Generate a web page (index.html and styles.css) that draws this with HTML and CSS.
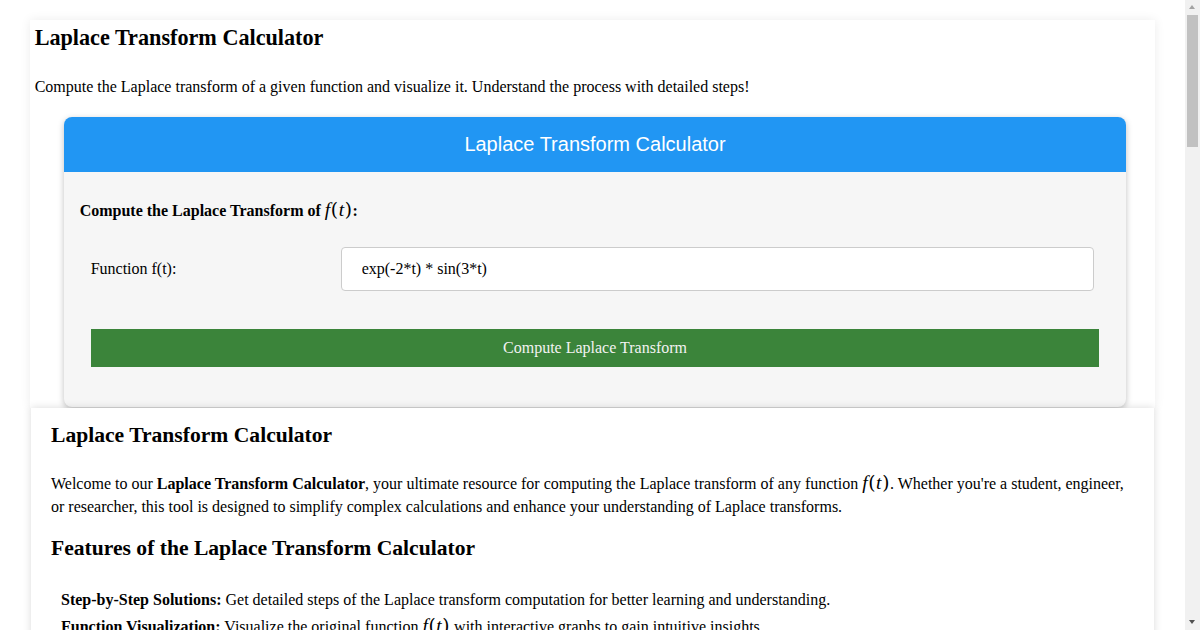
FILE: index.html
```html
<!DOCTYPE html>
<html lang="en">
<head>
  <meta charset="UTF-8">
  <meta name="viewport" content="width=device-width, initial-scale=1">
  <title>Laplace Transform Calculator</title>
  <link rel="stylesheet" href="styles.css">
</head>
<body>

  <div class="container">
    <h2>Laplace Transform Calculator</h2>
    <p>Compute the Laplace transform of a given function and visualize it. Understand the process with detailed steps!</p>

    <div class="card">
      <div class="card-header">Laplace Transform Calculator</div>
      <div class="card-body">
        <h4>Compute the Laplace Transform of <span class="math"><i>f</i>(<i>t</i>)</span>:</h4>

        <div class="form-row">
          <label for="func">Function f(t):</label>
          <input type="text" id="func" value="exp(-2*t) * sin(3*t)">
        </div>

        <button class="compute-btn">Compute Laplace Transform</button>
      </div>
    </div>
  </div>

  <div class="content">
    <h2>Laplace Transform Calculator</h2>
    <p>Welcome to our <b>Laplace Transform Calculator</b>, your ultimate resource for computing the Laplace transform of any function <span class="math"><i>f</i>(<i>t</i>)</span>. Whether you're a student, engineer, or researcher, this tool is designed to simplify complex calculations and enhance your understanding of Laplace transforms.</p>

    <h2>Features of the Laplace Transform Calculator</h2>
    <ul class="features">
      <li><b>Step-by-Step Solutions:</b> Get detailed steps of the Laplace transform computation for better learning and understanding.</li>
      <li><b>Function Visualization:</b> Visualize the original function <span class="math"><i>f</i>(<i>t</i>)</span> with interactive graphs to gain intuitive insights.</li>
      <li><b>Common Transforms:</b> Quickly look up the Laplace transforms of frequently used functions.</li>
      <li><b>Inverse Transforms:</b> Switch direction and recover the original function from its transform.</li>
    </ul>
  </div>

  <!-- browser scrollbar, drawn since the screenshot has one -->
  <div class="scrollbar">
    <span class="arrow up"></span>
    <div class="thumb"></div>
    <span class="arrow down"></span>
  </div>

</body>
</html>
```

FILE: styles.css
```css
body {
  background: white;
  font-family: "Liberation Serif", "Times New Roman", serif;
  font-size: 16px;
  margin: 0 15px 0 0;
  color: #000;
}

.container {
  width: 95%;
  margin: 20px auto 0;
  padding: 5px 5px 1px;
  box-sizing: border-box;
  background: white;
  box-shadow: 0 0 10px rgba(0, 0, 0, 0.08);
}

.container h2 {
  font-size: 22.2px;
  margin: 0 0 27px;
}

.container p {
  margin: 0;
}

.math {
  font-family: "DejaVu Serif", "Liberation Serif", serif;
  font-size: 1.16em;
  font-weight: normal;
  line-height: 1;
  letter-spacing: 0.6px;
}

.math i {
  font-family: "Liberation Serif", serif;
  font-size: 1.05em;
}

.card {
  margin: 21px 24px 0 29px;
  border-radius: 8px;
  background: #f6f6f6;
  box-shadow: 0 2px 6px rgba(0, 0, 0, 0.25);
  overflow: hidden;
}

.card-header {
  background: #2196f3;
  color: white;
  font-family: "Liberation Sans", Arial, sans-serif;
  font-size: 20px;
  text-align: center;
  padding: 16px 0;
}

.card-body {
  padding: 28px 16px 40px;
}

.card-body h4 {
  font-size: 16px;
  margin: 0 0 27px;
}

.form-row {
  display: flex;
  align-items: center;
  margin: 0 16px 0 11px;
}

.form-row label {
  width: 250px;
}

.form-row input {
  flex: 1;
  height: 44px;
  box-sizing: border-box;
  padding: 0 20px;
  border: 1px solid #ccc;
  border-radius: 4px;
  font-family: "Liberation Serif", serif;
  font-size: 16px;
  background: white;
}

.compute-btn {
  display: block;
  width: calc(100% - 22px);
  margin: 38px 11px 0;
  height: 38px;
  border: none;
  background: #3b843a;
  color: #f2f2f2;
  font-family: "Liberation Serif", serif;
  font-size: 16px;
  cursor: pointer;
}

.content {
  width: 1123px;
  margin: 0 auto;
  padding: 15px 20px 20px;
  box-sizing: border-box;
  background: white;
  box-shadow: 0 0 8px rgba(0, 0, 0, 0.15);
}

.content h2 {
  font-size: 21.6px;
  margin: 0 0 24px;
}

.content p {
  line-height: 23px;
  margin: 0 0 18px;
}

.features {
  list-style: none;
  padding: 0 0 0 10px;
  margin: 27px 0 0;
}

.features li {
  line-height: 23px;
  margin-bottom: 4px;
}

.scrollbar {
  position: fixed;
  top: 0;
  right: 0;
  width: 15px;
  height: 100%;
  background: #f1f1f1;
}

.thumb {
  margin: 15px 2px 0;
  height: 132px;
  background: #c1c1c1;
}

.arrow {
  position: absolute;
  left: 4px;
  width: 0;
  height: 0;
  border-left: 3.5px solid transparent;
  border-right: 3.5px solid transparent;
}

.arrow.up {
  top: 5px;
  border-bottom: 4px solid #a3a3a3;
}

.arrow.down {
  bottom: 6px;
  border-top: 4px solid #505050;
}
```
